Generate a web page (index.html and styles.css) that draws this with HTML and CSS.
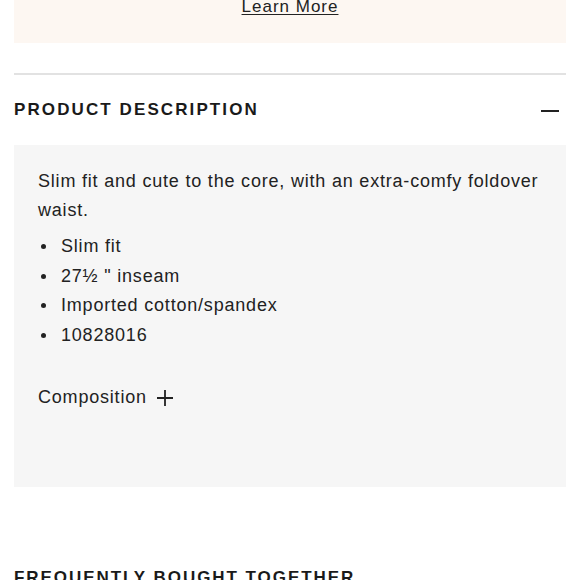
FILE: index.html
```html
<!DOCTYPE html>
<html lang="en">
<head>
<meta charset="utf-8">
<title>Product description</title>
<link rel="stylesheet" href="styles.css">
</head>
<body>
<div class="page">
  <div class="promo">
    <a class="learn" href="#">Learn More</a>
  </div>
  <div class="divider"></div>
  <div class="acc-head">
    <h2 class="acc-title">PRODUCT DESCRIPTION</h2>
    <span class="minus"></span>
  </div>
  <div class="acc-body">
    <p class="desc">Slim fit and cute to the core, with an extra-comfy foldover waist.</p>
    <ul class="bullets">
      <li>Slim fit</li>
      <li>27½ " inseam</li>
      <li>Imported cotton/spandex</li>
      <li>10828016</li>
    </ul>
    <div class="composition">
      <span>Composition</span>
      <svg class="plus" width="18" height="18" viewBox="0 0 18 18" aria-hidden="true">
        <path d="M9 1V17M1 9H17" stroke="#222" stroke-width="1.8" fill="none"/>
      </svg>
    </div>
  </div>
  <h2 class="fbt">FREQUENTLY BOUGHT TOGETHER</h2>
</div>
</body>
</html>
```
FILE: styles.css
```css
html, body {
  margin: 0;
  padding: 0;
  background: #ffffff;
}
body {
  font-family: "Liberation Sans", Arial, sans-serif;
  color: #222222;
}
.page {
  padding: 0 14px;
}
.promo {
  height: 43px;
  background: #fdf7f2;
  display: flex;
  justify-content: center;
  align-items: flex-start;
}
.learn {
  margin-top: -3px;
  font-size: 17px;
  line-height: 20px;
  color: #222222;
  text-decoration: underline;
  text-underline-offset: 2px;
  letter-spacing: 1px;
}
.divider {
  margin-top: 30px;
  height: 2px;
  background: #e2e2e2;
}
.acc-head {
  height: 70px;
  display: flex;
  align-items: center;
  justify-content: space-between;
}
.acc-title {
  margin: 0;
  font-size: 17px;
  line-height: 20px;
  font-weight: 700;
  letter-spacing: 2.1px;
  color: #1a1a1a;
}
.minus {
  width: 18px;
  height: 2px;
  background: #222222;
  margin-right: 7px;
  margin-top: 2px;
}
.acc-body {
  background: #f6f6f6;
  height: 342px;
  box-sizing: border-box;
  padding: 22px 24px 0 24px;
}
.desc {
  margin: 0;
  font-size: 18px;
  line-height: 29px;
  letter-spacing: 0.8px;
}
.bullets {
  list-style: none;
  margin: 7px 0 0 0;
  padding: 0;
}
.bullets li {
  display: flex;
  align-items: center;
  font-size: 18px;
  line-height: 29.5px;
  letter-spacing: 0.8px;
}
.bullets li::before {
  content: "";
  width: 5px;
  height: 5px;
  border-radius: 50%;
  background: #222222;
  margin-left: 3px;
  margin-right: 15px;
  flex: none;
}
.composition {
  margin-top: 33px;
  display: flex;
  align-items: center;
  gap: 9px;
  font-size: 18px;
  line-height: 29px;
  letter-spacing: 0.8px;
}
.plus {
  display: block;
}
.fbt {
  margin: 81px 0 0 0;
  font-size: 17px;
  line-height: 20px;
  font-weight: 700;
  letter-spacing: 1.95px;
  color: #1a1a1a;
}
```
